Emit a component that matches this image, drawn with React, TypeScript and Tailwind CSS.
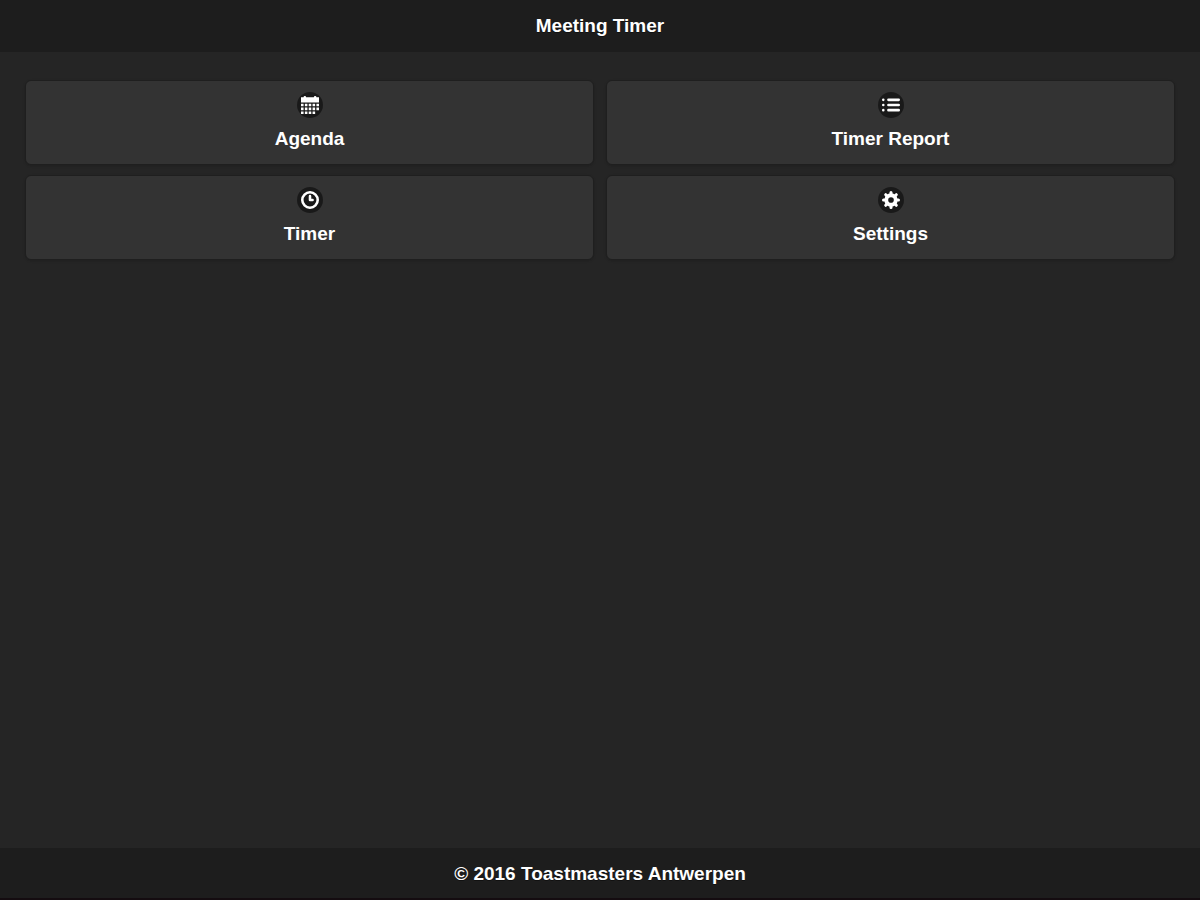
import type { ReactNode } from "react"

type MenuItem = {
  label: string
  icon: ReactNode
}

const menuItems: MenuItem[] = [
  {
    label: "Agenda",
    icon: (
      <path d="M0 6h2v2H0zM3 6h2v2H3zM6 6h2v2H6zM9 6h2v2H9zM12 6h2v2h-2zM0 9h2v2H0zM3 9h2v2H3zM6 9h2v2H6zM9 9h2v2H9zM12 9h2v2h-2zM0 12h2v2H0zM3 12h2v2H3zM6 12h2v2H6zM9 12h2v2H9zM12 1a1 1 0 0 0-2 0H4a1 1 0 0 0-2 0H0v4h14V1z" />
    ),
  },
  {
    label: "Timer Report",
    icon: (
      <path d="M5 4h8a1 1 0 0 0 0-2H5a1 1 0 0 0 0 2zM13 6H5a1 1 0 0 0 0 2h8a1 1 0 0 0 0-2zM13 10H5a1 1 0 0 0 0 2h8a1 1 0 0 0 0-2zM1 2a1 1 0 1 0 0 2 1 1 0 0 0 0-2zM1 6a1 1 0 1 0 0 2 1 1 0 0 0 0-2zM1 10a1 1 0 1 0 0 2 1 1 0 0 0 0-2z" />
    ),
  },
  {
    label: "Timer",
    icon: (
      <path
        fillRule="evenodd"
        d="M7 0a7 7 0 1 0 0 14A7 7 0 0 0 7 0zM7 12A5 5 0 1 1 7 2a5 5 0 0 1 0 10zM9 6H8V4a1 1 0 0 0-2 0v3a1 1 0 0 0 1 1h2a1 1 0 0 0 0-2z"
      />
    ),
  },
  {
    label: "Settings",
    icon: (
      <>
        <circle cx="7" cy="7" r="3.7" fill="none" stroke="currentColor" strokeWidth="3" />
        <path
          fill="none"
          stroke="currentColor"
          strokeWidth="2.4"
          strokeLinecap="round"
          d="M7 1.2v1M7 11.8v1M1.2 7h1M11.8 7h1M2.9 2.9l.7.7M10.4 10.4l.7.7M2.9 11.1l.7-.7M10.4 3.6l.7-.7"
        />
      </>
    ),
  },
]

function MenuButton({ label, icon }: MenuItem) {
  return (
    <button
      type="button"
      className="flex cursor-pointer flex-col items-center gap-[7px] rounded-md border border-[#1f1f1f] bg-[#333] px-4 py-[11px] shadow-sm hover:bg-[#373737]"
    >
      <span className="flex size-[26px] items-center justify-center rounded-full bg-black/50">
        <svg viewBox="0 0 14 14" className="size-[18px]" fill="currentColor" aria-hidden="true">
          {icon}
        </svg>
      </span>
      <span>{label}</span>
    </button>
  )
}

export default function App() {
  return (
    <div className="flex min-h-screen flex-col bg-[#252525] font-['Liberation_Sans',Arial,sans-serif] text-[19px] leading-7 font-bold text-white [text-shadow:0_1px_0_#111]">
      <header className="bg-[#1d1d1d] py-3 text-center">
        <h1>Meeting Timer</h1>
      </header>

      <main className="flex-1 px-[25px] py-7">
        <div className="grid grid-cols-2 gap-x-3 gap-y-2.5">
          {menuItems.map((item) => (
            <MenuButton key={item.label} {...item} />
          ))}
        </div>
      </main>

      <footer className="border-b-2 border-[#140c10] bg-[#1d1d1d] pt-3 pb-2.5 text-center">
        <h2>© 2016 Toastmasters Antwerpen</h2>
      </footer>
    </div>
  )
}
